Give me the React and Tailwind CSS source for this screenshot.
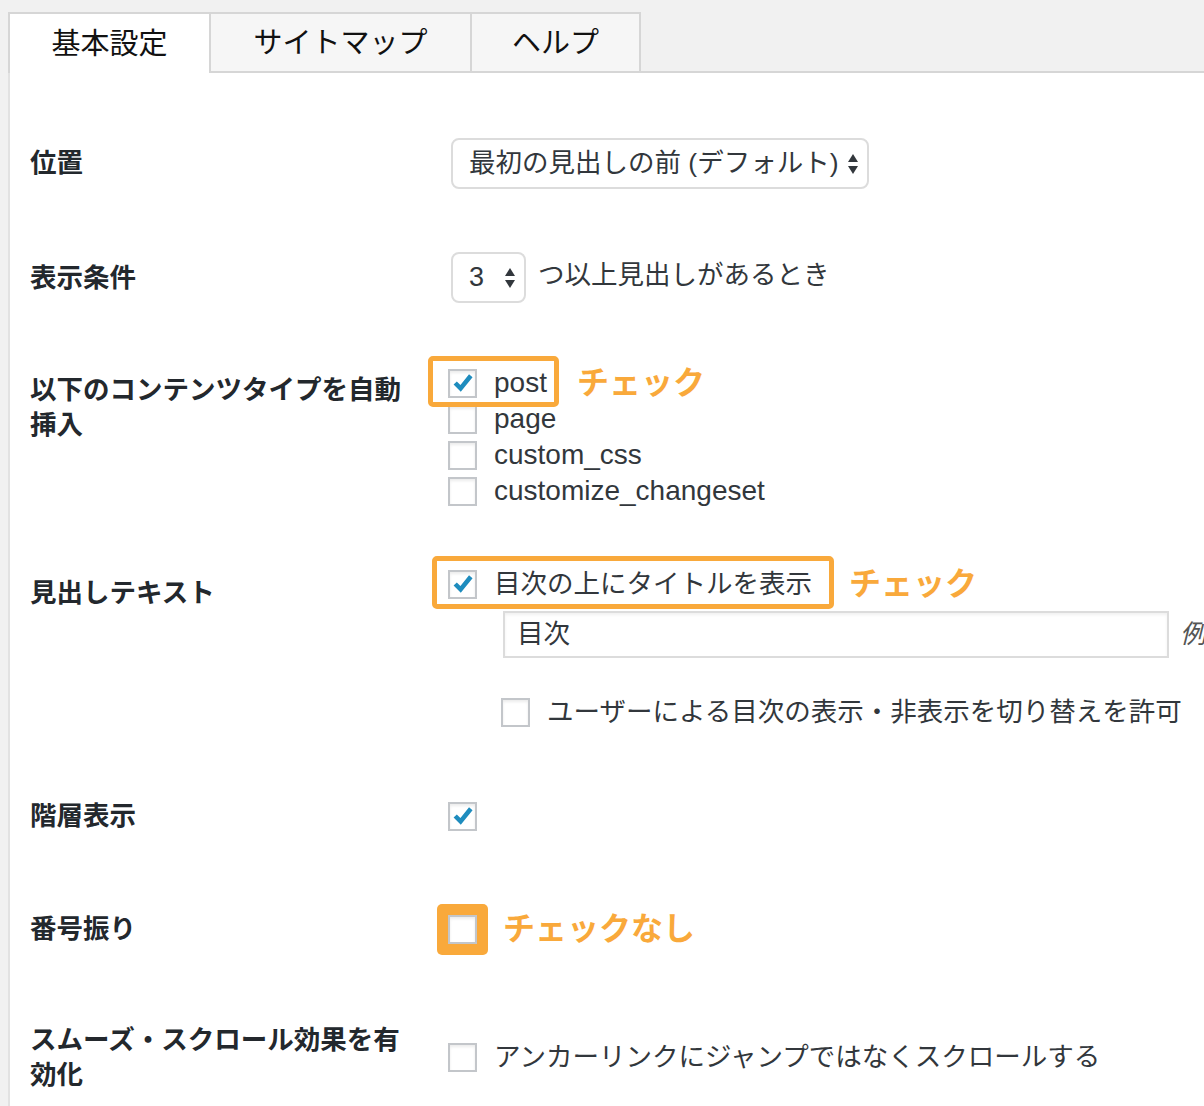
import React from "react";

const FONT = { fontFamily: '"Liberation Sans", "Noto Sans CJK JP", sans-serif' };

const Check = () => (
  <svg viewBox="0 0 20 20" className="w-[24px] h-[24px]">
    <path d="M3.5 10 L8 14.5 L16.5 4" fill="none" stroke="#1e8cbe" strokeWidth="3.8" />
  </svg>
);

const Box = ({ checked }) => (
  <span className="inline-flex w-[29px] h-[29px] shrink-0 items-center justify-center border-2 border-[#c3c6ca] bg-white shadow-[inset_0_2px_3px_rgba(0,0,0,0.08)]">
    {checked && <Check />}
  </span>
);

// latin option names render a touch larger than the japanese ones
const Option = ({ checked, label, latin, className = "" }) => (
  <div className={`flex items-center h-[36px] ${className}`}>
    <Box checked={checked} />
    <span className={`ml-[17px] text-[#32373c] leading-none ${latin ? "text-[28px]" : "text-[26.5px]"}`}>{label}</span>
  </div>
);

const Note = ({ children, className = "" }) => (
  <span className={`text-[32px] font-bold text-[#f9a93b] leading-none ${className}`}>{children}</span>
);

const Arrows = () => (
  <svg viewBox="0 0 12 24" className="w-[12px] h-[24px]">
    <path d="M6 2 L11 10 L1 10 Z" fill="#32373c" />
    <path d="M6 22 L11 14 L1 14 Z" fill="#32373c" />
  </svg>
);

const Select = ({ value, width, size = "text-[26.5px]" }) => (
  <div
    className={`flex items-center justify-between h-[51px] pl-[16px] pr-[8px] border-2 border-[#dcdcdc] rounded-[8px] bg-white ${width}`}
  >
    <span className={`${size} text-[#32373c] leading-none`}>{value}</span>
    <Arrows />
  </div>
);

const Row = ({ label, labelPad = "pt-[10px]", height, children }) => (
  <div className={`flex items-start ${height}`}>
    <div className={`w-[418px] shrink-0 pr-[30px] ${labelPad}`}>
      <div className="text-[26.5px] leading-[35px] font-bold text-[#23282d]">{label}</div>
    </div>
    <div className="flex-1">{children}</div>
  </div>
);

export default function App() {
  return (
    <div className="w-[1204px] h-[1106px] overflow-hidden bg-[#f1f1f1]" style={FONT}>
      {/* tab bar */}
      <div className="flex items-end pt-[12px] pl-[8px]">
        <div className="w-[201px] h-[61px] flex items-center justify-center pt-[2px] bg-white border-t-2 border-l-2 border-[#d6d6d6] text-[29px] text-[#111]">
          基本設定
        </div>
        <div className="w-[261px] h-[61px] flex items-center justify-center pt-[2px] bg-[#f6f6f6] border-t-2 border-l-2 border-b-2 border-[#d6d6d6] text-[29px] text-[#111]">
          サイトマップ
        </div>
        <div className="w-[171px] h-[61px] flex items-center justify-center pt-[2px] bg-[#f6f6f6] border-t-2 border-l-2 border-r-2 border-b-2 border-[#d6d6d6] text-[29px] text-[#111]">
          ヘルプ
        </div>
        <div className="flex-1 border-b-2 border-[#d6d6d6]" />
      </div>

      {/* settings panel */}
      <div className="ml-[8px] border-l-2 border-[#e2e2e2] bg-white h-full pl-[20px] pt-[65px]">
        <Row label="位置" labelPad="pt-[8px]" height="h-[114px]">
          <div className="pl-[3px]">
            <Select value="最初の見出しの前 (デフォルト)" width="w-[418px]" />
          </div>
        </Row>

        <Row label="表示条件" labelPad="pt-[9px]" height="h-[113px]">
          <div className="flex items-center pl-[3px]">
            <Select value="3" width="w-[75px]" size="text-[27px]" />
            <span className="ml-[12px] text-[26.5px] text-[#32373c] leading-none -mt-[4px]">つ以上見出しがあるとき</span>
          </div>
        </Row>

        <Row label="以下のコンテンツタイプを自動挿入" labelPad="pt-[8px]" height="h-[201px]">
          <div className="flex items-center">
            <div className="relative">
              <span className="absolute -left-[20px] -right-[12px] -top-[9px] -bottom-[6px] border-[5px] border-[#f9a93b] rounded-[5px]" />
              <Option checked latin label="post" />
            </div>
            <Note className="ml-[30px]">チェック</Note>
          </div>
          <Option latin label="page" />
          <Option latin label="custom_css" />
          <Option latin label="customize_changeset" />
        </Row>

        <Row label="見出しテキスト" labelPad="pt-[10px]" height="h-[232px]">
          <div className="flex items-center">
            <div className="relative">
              <span className="absolute -left-[16px] -right-[22px] -top-[10px] -bottom-[7px] border-[5px] border-[#f9a93b] rounded-[5px]" />
              <Option checked label="目次の上にタイトルを表示" />
            </div>
            <Note className="ml-[37px]">チェック</Note>
          </div>
          <div className="flex items-center mt-[9px] pl-[55px]">
            <div className="w-[666px] h-[47px] flex items-center pl-[12px] border-2 border-[#dcdcdc] shadow-[inset_0_2px_3px_rgba(0,0,0,0.06)] text-[26.5px] text-[#32373c]">
              目次
            </div>
            <span className="ml-[11px] text-[26px] italic text-[#555]">例</span>
          </div>
          <Option label="ユーザーによる目次の表示・非表示を切り替えを許可" className="mt-[36px] pl-[53px]" />
        </Row>

        <Row label="階層表示" labelPad="pt-[1px]" height="h-[113px]">
          <Option checked label="" />
        </Row>

        <Row label="番号振り" labelPad="pt-[1px]" height="h-[112px]">
          <div className="flex items-center h-[36px]">
            <span className="inline-flex p-[11px] -m-[11px] bg-[#f9a93b] rounded-[5px]">
              <Box />
            </span>
            <Note className="ml-[26px]">チェックなし</Note>
          </div>
        </Row>

        <Row label="スムーズ・スクロール効果を有効化" labelPad="pt-0" height="h-[100px]">
          <Option label="アンカーリンクにジャンプではなくスクロールする" className="mt-[16px]" />
        </Row>
      </div>
    </div>
  );
}
